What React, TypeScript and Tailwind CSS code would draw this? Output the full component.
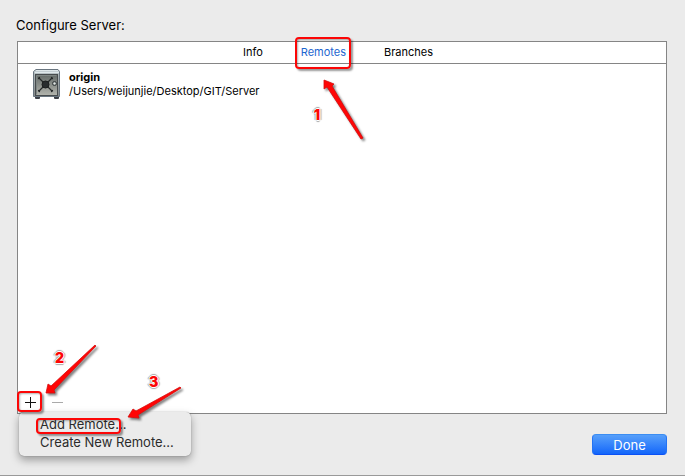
import type { ReactNode } from "react";

const tabs = ["Info", "Remotes", "Branches"];

function Highlight({ className }: { className: string }) {
  return (
    <span
      aria-hidden="true"
      className={`pointer-events-none absolute rounded-[4px] border-2 border-[#fc0606] shadow-[2px_2px_2px_rgba(0,0,0,0.4),inset_1px_1px_2px_rgba(0,0,0,0.3)] ${className}`}
    />
  );
}

function StepNumber({ className, children }: { className: string; children: ReactNode }) {
  return (
    <span
      className={`pointer-events-none absolute font-[Inter,sans-serif] text-[14px] leading-4 font-black text-[#fc0606] [text-shadow:1px_0_#fff,-1px_0_#fff,0_1px_#fff,0_-1px_#fff,2px_0_1px_#aaa,-2px_0_1px_#aaa,0_2px_1px_#aaa,0_-2px_1px_#aaa] ${className}`}
    >
      {children}
    </span>
  );
}

function Arrow({ className, points, width, height }: { className: string; points: string; width: number; height: number }) {
  return (
    <svg
      aria-hidden="true"
      width={width}
      height={height}
      viewBox={`0 0 ${width} ${height}`}
      className={`pointer-events-none absolute max-w-none overflow-visible drop-shadow-[2px_2px_1px_rgba(0,0,0,0.5)] ${className}`}
    >
      <polygon points={points} fill="#ff0505" stroke="#d60c0c" strokeWidth="0.8" strokeLinejoin="round" />
    </svg>
  );
}

function SafeIcon() {
  return (
    <svg width="30" height="32" viewBox="0 0 30 32" aria-hidden="true" className="shrink-0">
      <defs>
        <linearGradient id="safeDoor" x1="0" y1="0" x2="0" y2="1">
          <stop offset="0" stopColor="#626967" />
          <stop offset="1" stopColor="#b3b5ae" />
        </linearGradient>
        <linearGradient id="safeCase" x1="0" y1="0" x2="0" y2="1">
          <stop offset="0" stopColor="#d3dee3" />
          <stop offset="0.2" stopColor="#aab4b7" />
          <stop offset="1" stopColor="#85898a" />
        </linearGradient>
      </defs>
      <rect x="3" y="28" width="5" height="3" rx="1" fill="#3b3f46" />
      <rect x="22" y="28" width="5" height="3" rx="1" fill="#3b3f46" />
      <path d="M4 1.5h22l1.5 2v25h-26v-25z" fill="url(#safeCase)" stroke="#69757f" />
      <path d="M4 2.5h22M3 4.5h24" stroke="#dfe8eb" />
      <rect x="3.5" y="6.5" width="22" height="21" fill="url(#safeDoor)" stroke="#474c4e" />
      <path d="M4.5 26.5v-19h20" fill="none" stroke="#7d8583" />
      <g stroke="#25292a" strokeWidth="1.2" strokeLinecap="round">
        <path d="M7 10l13 13M20 10L7 23" />
        <path d="M6.5 10.5l1-1M19.500 9.500l1 1M6.500 22.500l1 1M19.500 23.500l1-1" />
      </g>
      <circle cx="13.500" cy="16.500" r="3.500" fill="#282c2e" stroke="#1b1d1e" />
      <circle cx="22.500" cy="15.500" r="2" fill="#a9b0af" stroke="#353b3d" />
      <circle cx="22.500" cy="15.500" r="0.8" fill="#e2e6e4" />
    </svg>
  );
}

export default function App() {
  return (
    <main className="flex h-screen flex-col border-b border-[#999] bg-[#ebebeb] pt-[15px] pr-[18px] pb-5 pl-4 font-[Inter,sans-serif] text-black">
      <h1 className="text-[13px] leading-5">Configure Server:</h1>

      <section className="mt-[6px] ml-px flex min-h-0 flex-1 flex-col border border-[#858585] bg-white">
        <nav className="flex h-[22px] shrink-0 items-start justify-center gap-[38px] border-b border-[#858585] pt-px pr-2 text-[11px] leading-[18px]">
          {tabs.map((tab) =>
            tab === "Remotes" ? (
              <div key={tab} className="relative flex">
                <button type="button" className="text-[#1d66cf]">{tab}</button>
                <Highlight className="-top-[6px] -left-[6px] h-8 w-[56px]" />
                <Arrow className="top-[37px] left-[22px]" width={40} height={61} points="1,0 1,9 4,7 38,59 40,58 9,6 11,4" />
                <StepNumber className="top-16 left-[13px]">1</StepNumber>
              </div>
            ) : (
              <button key={tab} type="button">{tab}</button>
            ),
          )}
        </nav>

        <ul className="min-h-0 flex-1">
          <li className="flex gap-[7px] pt-1 pl-[14px]">
            <SafeIcon />
            <div className="pt-[2px] text-[11px] leading-[14px]">
              <p className="font-bold">origin</p>
              <p>/Users/weijunjie/Desktop/GIT/Server</p>
            </div>
          </li>
        </ul>

        <footer className="relative flex h-[22px] shrink-0 items-center gap-[13px] pl-[5px]">
          <button type="button" aria-label="Add" className="flex">
            <svg width="14" height="14" viewBox="0 0 14 14" aria-hidden="true">
              <path d="M2 7.5h11M7.5 2v11" stroke="#111" fill="none" />
            </svg>
          </button>
          <button type="button" aria-label="Remove" disabled className="flex">
            <svg width="14" height="14" viewBox="0 0 14 14" aria-hidden="true">
              <path d="M2 7.5h11" stroke="#aaa" fill="none" />
            </svg>
          </button>

          <div
            role="menu"
            className="absolute top-[21px] left-px flex w-[172px] flex-col rounded-[5px] bg-[#ebebeb] pt-[3px] pb-[5px] text-[13px] leading-[18px] text-[#2b2b2b] shadow-[0_0_1px_rgba(0,0,0,0.45),0_4px_8px_rgba(0,0,0,0.35)]"
          >
            <button type="button" role="menuitem" className="pl-[21px] text-left">Add Remote...</button>
            <button type="button" role="menuitem" className="pl-[21px] text-left">Create New Remote...</button>
            <Highlight className="top-[6px] left-[17px] h-4 w-[85px]" />
          </div>

          <Highlight className="top-0 -left-px h-[21px] w-[25px]" />
          <Arrow className="-top-[47px] left-[28px]" width={52} height={50} points="0,49 2,40 5,42 49,1 50,2 8,46 9,49" />
          <StepNumber className="-top-[41px] left-[37px]">2</StepNumber>
          <Arrow className="-top-[5px] left-[110px]" width={55} height={32} points="0,31 5,23 8,25 52,1 53,2 10,29 11,32" />
          <StepNumber className="-top-[17px] left-[131px]">3</StepNumber>
        </footer>
      </section>

      <div className="mt-5 flex shrink-0 justify-end">
        <button
          type="button"
          className="h-[21px] w-[75px] rounded-[4px] border border-t-[#3b8df2] border-x-[#2474f4] border-b-[#0b50f5] bg-linear-to-b from-[#569ffa] to-[#1265fa] text-[13px] leading-[18px] text-white"
        >
          Done
        </button>
      </div>
    </main>
  );
}
